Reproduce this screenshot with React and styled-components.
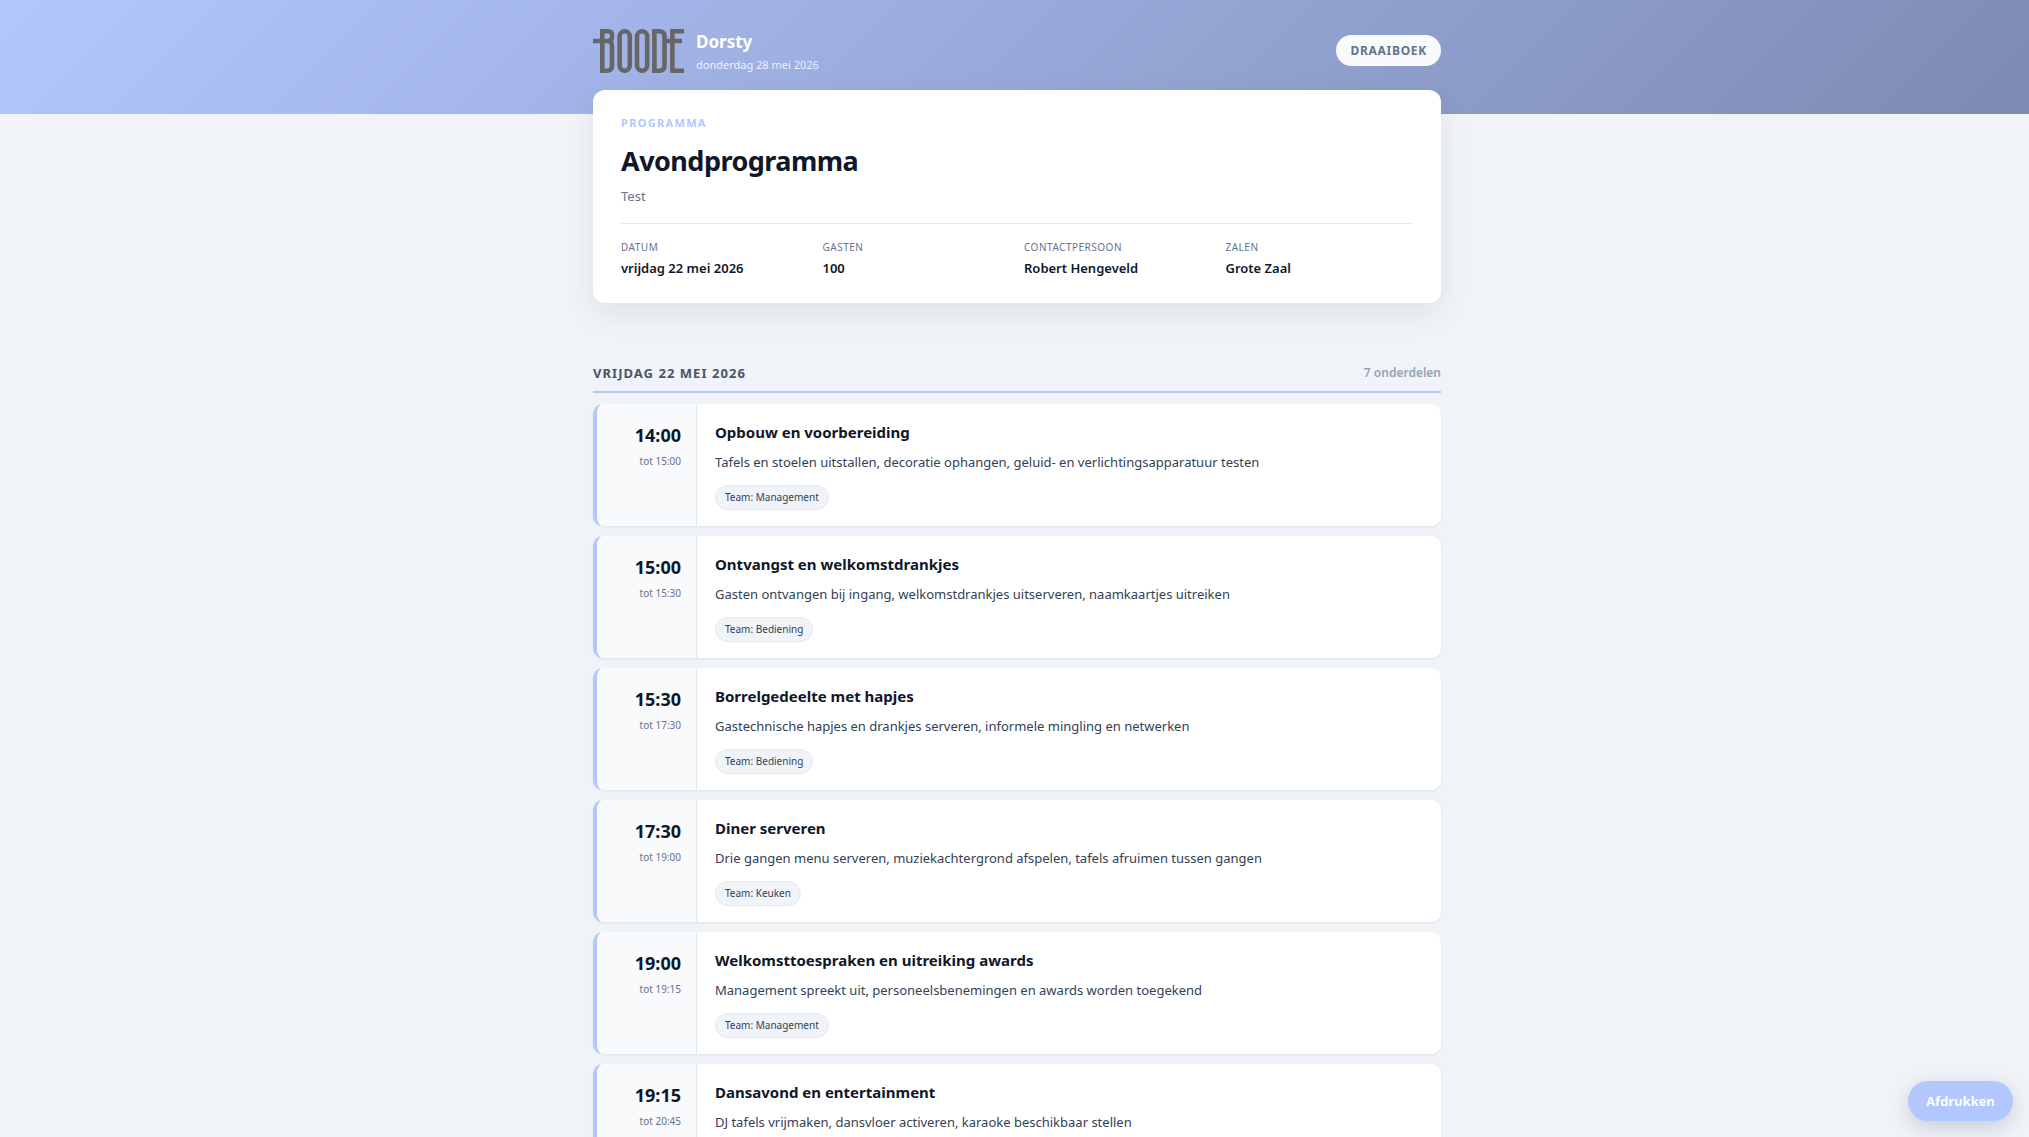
import React from "react";
import styled, {createGlobalStyle} from "styled-components";

const GlobalStyle = createGlobalStyle`
    * {
        box-sizing: border-box;
    }

    body {
        margin: 0;
        background: #f0f4f9;
        color: #0f172a;
        font-family: "Segoe UI", "Noto Sans", "Open Sans", sans-serif;
        font-size: 14px;
        line-height: 20px;
    }

    h1, h2, h3, p, dl, dd, ul {
        margin: 0;
        padding: 0;
    }
`;

const Container = styled.div`
    max-width: 885px;
    margin: 0 auto;
    padding: 0 16px 0 21px;
`;

const Header = styled.header`
    height: 114px;
    background: linear-gradient(135deg, #b3c7ff 0%, #7d8bb3 100%);
`;

const HeaderRow = styled.div`
    display: flex;
    align-items: center;
    justify-content: space-between;
    padding-top: 25px;
`;

const Brand = styled.div`
    display: flex;
    align-items: center;
    gap: 11px;
`;

const BrandText = styled.div`
    padding-top: 5px;
`;

const BrandName = styled.div`
    color: #fff;
    font-size: 17px;
    font-weight: 700;
    line-height: 24px;
`;

const BrandDate = styled.div`
    color: rgba(255, 255, 255, 0.85);
    font-size: 11px;
    line-height: 22px;
`;

const Badge = styled.span`
    padding: 6px 14px;
    border-radius: 999px;
    background: #f8fafc;
    color: #64748b;
    font-size: 12px;
    font-weight: 700;
    line-height: 19px;
    letter-spacing: 0.06em;
    text-transform: uppercase;
`;

const Hero = styled.section`
    margin-top: -24px;
    padding: 24px 28px;
    border-radius: 12px;
    background: #fff;
    box-shadow: 0 10px 30px rgba(15, 23, 42, 0.08);
`;

const Eyebrow = styled.div`
    color: #b3c7ff;
    font-size: 11px;
    font-weight: 700;
    line-height: 18px;
    letter-spacing: 0.12em;
    text-transform: uppercase;
`;

const Title = styled.h1`
    margin-top: 12px;
    font-size: 27px;
    font-weight: 700;
    line-height: 34px;
    letter-spacing: -0.02em;
`;

const Subtitle = styled.p`
    margin-top: 8px;
    color: #64748b;
    font-size: 13px;
`;

const Meta = styled.dl`
    display: grid;
    grid-template-columns: repeat(4, 1fr);
    gap: 14px;
    margin-top: 17px;
    padding-top: 15px;
    border-top: 1px solid #e2e8f0;
`;

const MetaLabel = styled.dt`
    color: #64748b;
    font-size: 10px;
    line-height: 16px;
    letter-spacing: 0.05em;
    text-transform: uppercase;
`;

const MetaValue = styled.dd`
    padding-top: 2px;
    font-size: 13px;
    font-weight: 600;
    line-height: 22px;
`;

const DayHeader = styled.div`
    display: flex;
    align-items: center;
    justify-content: space-between;
    margin-top: 58px;
    padding-bottom: 6px;
    border-bottom: 2px solid #b3c7ff;
`;

const DayTitle = styled.h2`
    color: #475569;
    font-size: 13px;
    font-weight: 700;
    line-height: 24px;
    letter-spacing: 0.08em;
    text-transform: uppercase;
`;

const DayCount = styled.span`
    color: #94a3b8;
    font-size: 12px;
    font-weight: 600;
    line-height: 24px;
`;

const List = styled.ul`
    display: flex;
    flex-direction: column;
    gap: 10px;
    padding: 11px 0 40px;
    list-style: none;
`;

const Card = styled.li`
    display: grid;
    grid-template-columns: 100px 1fr;
    overflow: hidden;
    border-left: 4px solid #b3c7ff;
    border-radius: 10px;
    background: #fff;
    box-shadow: 0 1px 3px rgba(15, 23, 42, 0.08);
`;

const TimeColumn = styled.div`
    padding: 17px 15px 16px;
    border-right: 1px solid #e2e8f0;
    background: #f8fafc;
    text-align: right;
`;

const StartTime = styled.div`
    font-size: 18px;
    font-weight: 700;
    line-height: 28px;
`;

const EndTime = styled.div`
    color: #64748b;
    font-size: 10px;
    line-height: 24px;
`;

const CardBody = styled.div`
    padding: 15px 18px 16px;
`;

const CardTitle = styled.h3`
    font-size: 15px;
    font-weight: 700;
    line-height: 26px;
`;

const CardText = styled.p`
    padding-top: 5px;
    color: #334155;
    font-size: 13px;
    line-height: 24px;
`;

const Tag = styled.span`
    display: inline-block;
    margin-top: 11px;
    padding: 2px 9px;
    border: 1px solid #e2e8f0;
    border-radius: 999px;
    background: #f0f4f9;
    color: #334155;
    font-size: 10px;
    line-height: 19px;
    vertical-align: top;
`;

const PrintButton = styled.button`
    position: fixed;
    right: 16px;
    bottom: 16px;
    padding: 10px 18px;
    border: none;
    border-radius: 999px;
    background: #b3c7ff;
    box-shadow: 0 6px 20px rgba(15, 23, 42, 0.18);
    color: #fff;
    font-family: inherit;
    font-size: 13px;
    font-weight: 700;
    line-height: 20px;
    cursor: pointer;
`;

const meta = [
    {label: 'Datum', value: 'vrijdag 22 mei 2026'},
    {label: 'Gasten', value: '100'},
    {label: 'Contactpersoon', value: 'Robert Hengeveld'},
    {label: 'Zalen', value: 'Grote Zaal'}
];

const items = [
    {start: '14:00', end: '15:00', title: 'Opbouw en voorbereiding', text: 'Tafels en stoelen uitstallen, decoratie ophangen, geluid- en verlichtingsapparatuur testen', team: 'Management'},
    {start: '15:00', end: '15:30', title: 'Ontvangst en welkomstdrankjes', text: 'Gasten ontvangen bij ingang, welkomstdrankjes uitserveren, naamkaartjes uitreiken', team: 'Bediening'},
    {start: '15:30', end: '17:30', title: 'Borrelgedeelte met hapjes', text: 'Gastechnische hapjes en drankjes serveren, informele mingling en netwerken', team: 'Bediening'},
    {start: '17:30', end: '19:00', title: 'Diner serveren', text: 'Drie gangen menu serveren, muziekachtergrond afspelen, tafels afruimen tussen gangen', team: 'Keuken'},
    {start: '19:00', end: '19:15', title: 'Welkomsttoespraken en uitreiking awards', text: 'Management spreekt uit, personeelsbenemingen en awards worden toegekend', team: 'Management'},
    {start: '19:15', end: '20:45', title: 'Dansavond en entertainment', text: 'DJ tafels vrijmaken, dansvloer activeren, karaoke beschikbaar stellen'}
];

const Logo = () => (
    <svg width="92" height="46" viewBox="0 0 92 46" fill="none" stroke="#666" strokeWidth="4.6" role="img" aria-label="Boode">
        <path d="M0 13H17M9.3 1V42.7H14Q19 42.7 19 37.5V18.5Q19 13 15 13Q19 13 19 9V7Q19 3.3 15 3.3H7" />
        <rect x="26.6" y="3.3" width="10.2" height="39.4" rx="5.1" />
        <rect x="44" y="3.3" width="10.2" height="39.4" rx="5.1" />
        <path d="M61.4 3.3H66.4Q71.5 3.3 71.5 8.5V37.5Q71.5 42.7 66.4 42.7H61.4ZM91 3.3H79.4V42.7H91M71 13H89" />
    </svg>
);

const TimelineItem = ({start, end, title, text, team}) => {
    return (
        <Card>
            <TimeColumn>
                <StartTime>{start}</StartTime>
                <EndTime>tot {end}</EndTime>
            </TimeColumn>
            <CardBody>
                <CardTitle>{title}</CardTitle>
                <CardText>{text}</CardText>
                {team && <Tag>Team: {team}</Tag>}
            </CardBody>
        </Card>
    )
}

export default function App() {
    return (
        <>
            <GlobalStyle />
            <Header>
                <Container>
                    <HeaderRow>
                        <Brand>
                            <Logo />
                            <BrandText>
                                <BrandName>Dorsty</BrandName>
                                <BrandDate>donderdag 28 mei 2026</BrandDate>
                            </BrandText>
                        </Brand>
                        <Badge>Draaiboek</Badge>
                    </HeaderRow>
                </Container>
            </Header>
            <Container as="main">
                <Hero>
                    <Eyebrow>Programma</Eyebrow>
                    <Title>Avondprogramma</Title>
                    <Subtitle>Test</Subtitle>
                    <Meta>
                        {meta.map(({label, value}) => (
                            <div key={label}>
                                <MetaLabel>{label}</MetaLabel>
                                <MetaValue>{value}</MetaValue>
                            </div>
                        ))}
                    </Meta>
                </Hero>
                <DayHeader>
                    <DayTitle>vrijdag 22 mei 2026</DayTitle>
                    <DayCount>7 onderdelen</DayCount>
                </DayHeader>
                <List>
                    {items.map(item => <TimelineItem key={item.start} {...item} />)}
                </List>
            </Container>
            <PrintButton type="button" onClick={() => window.print()}>Afdrukken</PrintButton>
        </>
    )
}
